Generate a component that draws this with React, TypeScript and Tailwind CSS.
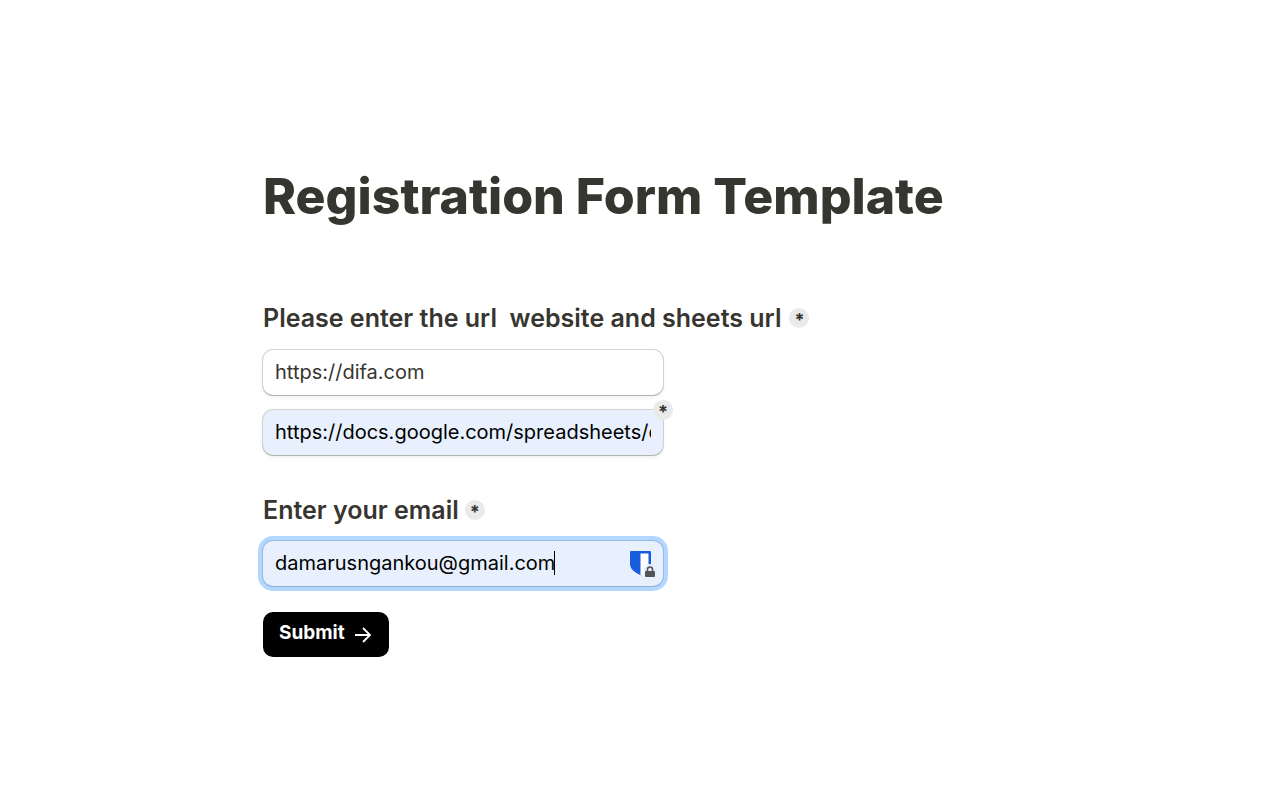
import { clsx } from "clsx"
import type { InputHTMLAttributes } from "react"

const RequiredMark = ({ className }: { className?: string }) => (
  <span
    className={clsx(
      "flex h-5 w-5 items-center justify-center rounded-full bg-[#eaeaea] text-[#37352f]",
      className
    )}
  >
    <span className="h-5 text-lg leading-6 font-bold">*</span>
  </span>
)

const TextField = ({ className, ...props }: InputHTMLAttributes<HTMLInputElement>) => (
  <input
    className={clsx(
      "block h-[45px] w-full rounded-[10px] px-3 pb-0.5 text-xl outline-none",
      className
    )}
    {...props}
  />
)

const fieldShadow =
  "shadow-[0_0_0_1px_rgba(61,59,53,0.2),0_1px_1px_0_rgba(0,0,0,0.16),0_2px_5px_0_rgba(61,59,53,0.08)]"

const focusShadow =
  "shadow-[0_0_0_1px_rgba(61,89,133,0.22),0_1px_1px_0_rgba(0,0,0,0.08),0_0_0_5px_#b3d7ff]"

const VaultIcon = () => (
  <svg className="h-7 w-7" viewBox="0 0 28 28" aria-hidden="true">
    <path
      d="M4 2h19a1 1 0 0 1 1 1v12c0 5-4 8.500-9.500 11.500C8 24 3 20 3 15V3a1 1 0 0 1 1-1z"
      fill="#175ddc"
    />
    <path d="M13.500 4.500h8V20l-5 6.500h-3z" fill="#fff" />
    <path
      d="M17 19.500l1-1.500a4.500 4.500 0 0 1 8.500 0l1 2V28H17z"
      fill="#e8f0fe"
    />
    <rect x="18" y="22" width="10" height="6" rx="1" fill="#555" />
    <path d="M20.500 22v-1.500a2.500 2.500 0 0 1 5 0V22" fill="none" stroke="#555" strokeWidth="1.600" />
  </svg>
)

const ArrowIcon = () => (
  <svg className="h-5 w-5" viewBox="0 0 20 20" fill="none" stroke="currentColor" strokeWidth="1.8" aria-hidden="true">
    <path d="M2 11h15M10 4l7 7-7 7" />
  </svg>
)

const App = () => {
  return (
    <main className="min-h-screen bg-white px-6 pt-[166px] font-['Inter',sans-serif] text-[#37352f]">
      <form className="mx-auto max-w-[735px]" onSubmit={(e) => e.preventDefault()}>
        <h1 className="text-[50px] leading-[60px] font-extrabold">Registration Form Template</h1>

        <div className="mt-[76px] flex items-center gap-2">
          <label htmlFor="website" className="text-[25px] leading-8 font-semibold whitespace-pre">
            {"Please enter the url  website and sheets url"}
          </label>
          <RequiredMark />
        </div>

        <div className="mt-4 flex max-w-[400px] flex-col gap-[15px]">
          <TextField id="website" type="url" defaultValue="https://difa.com" className={clsx("bg-white", fieldShadow)} />
          <div className="relative">
            <TextField
              type="url"
              aria-label="Sheets url"
              defaultValue="https://docs.google.com/spreadsheets/d/1"
              className={clsx("bg-[#e8f0fe] text-black", fieldShadow)}
            />
            <RequiredMark className="absolute -top-2.5 -right-2.5" />
          </div>
        </div>

        <div className="mt-[39px] flex items-center gap-1.5">
          <label htmlFor="email" className="text-[25px] leading-8 font-semibold">
            Enter your email
          </label>
          <RequiredMark />
        </div>

        <div className="relative mt-[15px] max-w-[400px]">
          <TextField
            id="email"
            type="email"
            defaultValue="damarusngankou@gmail.com"
            className={clsx("bg-[#e8f0fe] text-black", focusShadow)}
          />
          {/* text caret */}
          <span className="absolute top-2.5 left-[291px] h-6 w-px bg-black" />
          <span className="absolute top-2 right-2">
            <VaultIcon />
          </span>
        </div>

        <button
          type="submit"
          className="mt-[26px] flex h-[45px] items-center gap-2 rounded-[10px] bg-black px-4 pb-0.5 text-[19px] font-bold text-white"
        >
          Submit
          <ArrowIcon />
        </button>
      </form>
    </main>
  )
}

export default App
